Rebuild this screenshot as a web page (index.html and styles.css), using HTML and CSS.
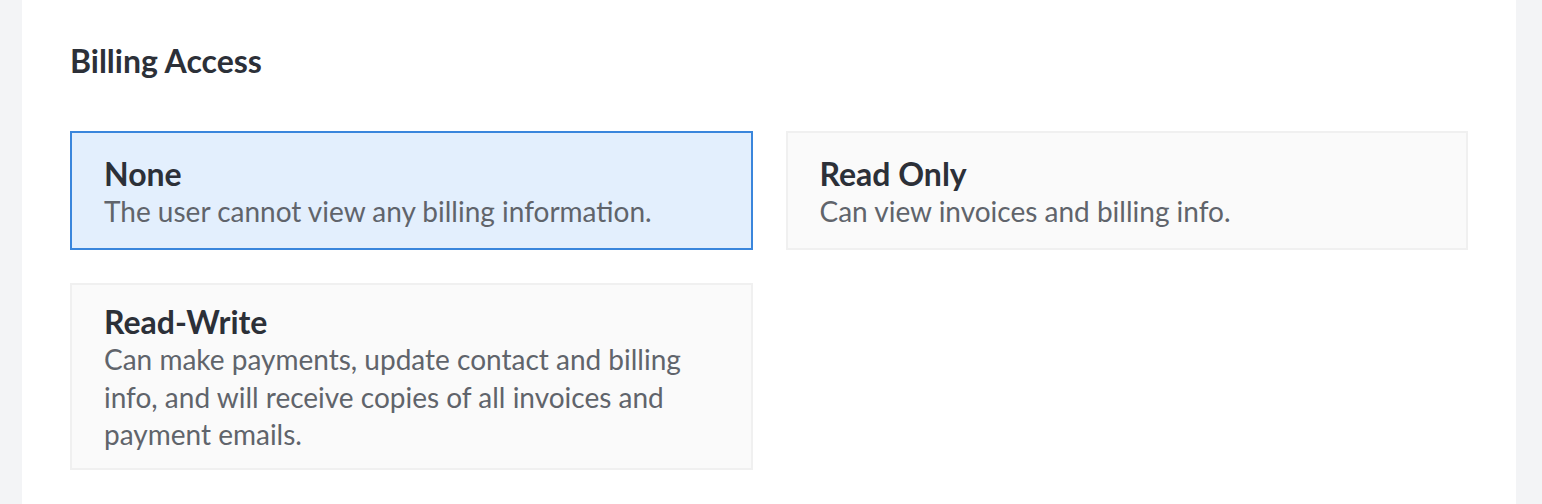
FILE: index.html
```html
<!DOCTYPE html>
<html lang="en">
<head>
<meta charset="utf-8">
<title>Billing Access</title>
<link rel="stylesheet" href="styles.css">
</head>
<body>
<main class="panel">
  <h2 class="heading">Billing Access</h2>
  <div class="options">
    <div class="option selected">
      <div class="option-title">None</div>
      <div class="option-desc">The user cannot view any billing information.</div>
    </div>
    <div class="option">
      <div class="option-title">Read Only</div>
      <div class="option-desc">Can view invoices and billing info.</div>
    </div>
    <div class="option">
      <div class="option-title">Read-Write</div>
      <div class="option-desc">Can make payments, update contact and billing info, and will receive copies of all invoices and payment emails.</div>
    </div>
  </div>
</main>
</body>
</html>
```

FILE: styles.css
```css
html, body {
  margin: 0;
  padding: 0;
}
body {
  background: #f3f4f6;
  font-family: Lato, "Open Sans", sans-serif;
}
.panel {
  box-sizing: border-box;
  margin-left: 22px;
  width: 1494px;
  min-height: 504px;
  background: #ffffff;
  padding: 42px 48px 0;
}
.heading {
  margin: 0 0 51px;
  font-size: 32px;
  line-height: 38px;
  font-weight: 700;
  color: #2c3038;
}
.options {
  display: grid;
  grid-template-columns: 1fr 1fr;
  column-gap: 33px;
  row-gap: 33px;
  align-items: start;
}
.option {
  box-sizing: border-box;
  min-height: 119px;
  display: flex;
  flex-direction: column;
  justify-content: center;
  padding: 18px 32px 14px;
  background: #fafafa;
  border: 2px solid #f0f0f0;
}
.option.selected {
  background: #e3effd;
  border-color: #3a86dc;
}
.option-title {
  font-size: 32px;
  line-height: 38px;
  font-weight: 700;
  color: #2c3038;
}
.option-desc {
  font-size: 28px;
  line-height: 37.5px;
  color: #60646b;
}
```
